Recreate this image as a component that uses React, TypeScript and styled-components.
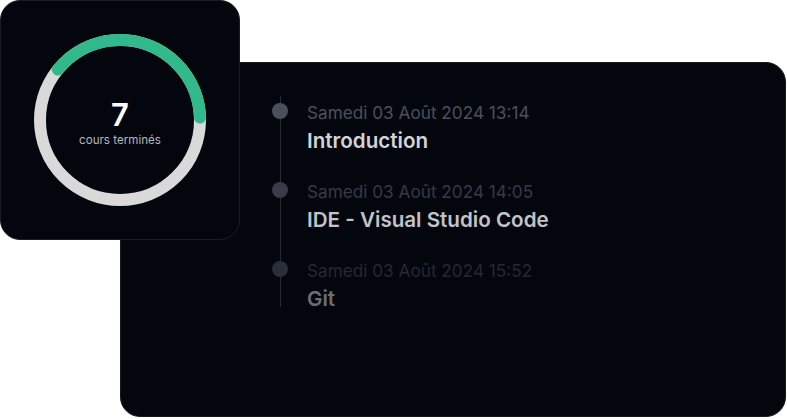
import React from "react";
import styled, { createGlobalStyle } from "styled-components";

const GlobalStyle = createGlobalStyle`
  html, body {
    margin: 0;
    padding: 0;
    background: #ffffff;
  }
  body {
    font-family: Inter, "Noto Sans", "Liberation Sans", sans-serif;
  }
`;

const Stage = styled.div`
  position: relative;
  width: 787px;
  height: 419px;
  padding: 62px 0 0 120px;
  box-sizing: border-box;
`;

const HistoryCard = styled.div`
  width: 666px;
  height: 355px;
  box-sizing: border-box;
  background: #04060e;
  border: 1px solid #161a24;
  border-radius: 20px;
  padding: 33px 0 0 151px;
`;

const Timeline = styled.ul`
  position: relative;
  list-style: none;
  margin: 0;
  padding: 0;
  display: flex;
  flex-direction: column;
  gap: 27px;

  &::before {
    content: "";
    position: absolute;
    left: 7.5px;
    top: 0;
    width: 1px;
    height: 211px;
    background: #262a35;
  }
`;

const Entry = styled.li`
  display: grid;
  grid-template-columns: 16px 1fr;
  column-gap: 19px;
  padding-top: 7px;
  &:not(:first-child) {
    padding-top: 0;
  }
`;

const Dot = styled.span<{ $color: string }>`
  position: relative;
  width: 16px;
  height: 16px;
  border-radius: 50%;
  background: ${(p) => p.$color};
`;

const EntryText = styled.div`
  display: flex;
  flex-direction: column;
  gap: 4px;
`;

const Date = styled.span<{ $color: string }>`
  font-size: 17.2px;
  line-height: 20px;
  color: ${(p) => p.$color};
`;

const Title = styled.span<{ $color: string }>`
  font-size: 20.6px;
  line-height: 28px;
  font-weight: 600;
  color: ${(p) => p.$color};
`;

const ProgressCard = styled.div`
  position: absolute;
  top: 0;
  left: 0;
  width: 240px;
  height: 240px;
  box-sizing: border-box;
  background: #04060e;
  border: 1px solid #1a1e2a;
  border-radius: 20px;
  display: flex;
  align-items: center;
  justify-content: center;
`;

const Ring = styled.div`
  position: relative;
  width: 172px;
  height: 172px;
  display: flex;
  flex-direction: column;
  align-items: center;
  justify-content: center;
`;

const RingSvg = styled.svg`
  position: absolute;
  inset: 0;
`;

const Count = styled.span`
  position: relative;
  font-size: 31px;
  line-height: 34px;
  font-weight: 600;
  color: #ffffff;
  margin-top: 6px;
`;

const Caption = styled.span`
  position: relative;
  font-size: 11.6px;
  line-height: 16px;
  color: #b3b6be;
`;

const entries = [
  { date: "Samedi 03 Août 2024 13:14", title: "Introduction", dot: "#4a4f5c", dateColor: "#4b505b", titleColor: "#d3d4d7" },
  { date: "Samedi 03 Août 2024 14:05", title: "IDE - Visual Studio Code", dot: "#383c48", dateColor: "#363a45", titleColor: "#c2c3c7" },
  { date: "Samedi 03 Août 2024 15:52", title: "Git", dot: "#2a2e39", dateColor: "#242832", titleColor: "#6b6e76" },
];

const R = 80;
const C = 2 * Math.PI * R;
const done = 139 / 360;

export default function App() {
  return (
    <>
      <GlobalStyle />
      <Stage>
        <HistoryCard>
          <Timeline>
            {entries.map((e) => (
              <Entry key={e.title}>
                <Dot $color={e.dot} />
                <EntryText>
                  <Date $color={e.dateColor}>{e.date}</Date>
                  <Title $color={e.titleColor}>{e.title}</Title>
                </EntryText>
              </Entry>
            ))}
          </Timeline>
        </HistoryCard>

        <ProgressCard>
          <Ring>
            <RingSvg width="172" height="172" viewBox="0 0 172 172">
              <circle cx="86" cy="86" r={R} fill="none" stroke="#d9d9d9" strokeWidth="12" />
              <circle
                cx="86"
                cy="86"
                r={R}
                fill="none"
                stroke="#31b98b"
                strokeWidth="12"
                strokeLinecap="round"
                strokeDasharray={`${C * done} ${C}`}
                transform="rotate(-141 86 86)"
              />
            </RingSvg>
            <Count>7</Count>
            <Caption>cours terminés</Caption>
          </Ring>
        </ProgressCard>
      </Stage>
    </>
  );
}
